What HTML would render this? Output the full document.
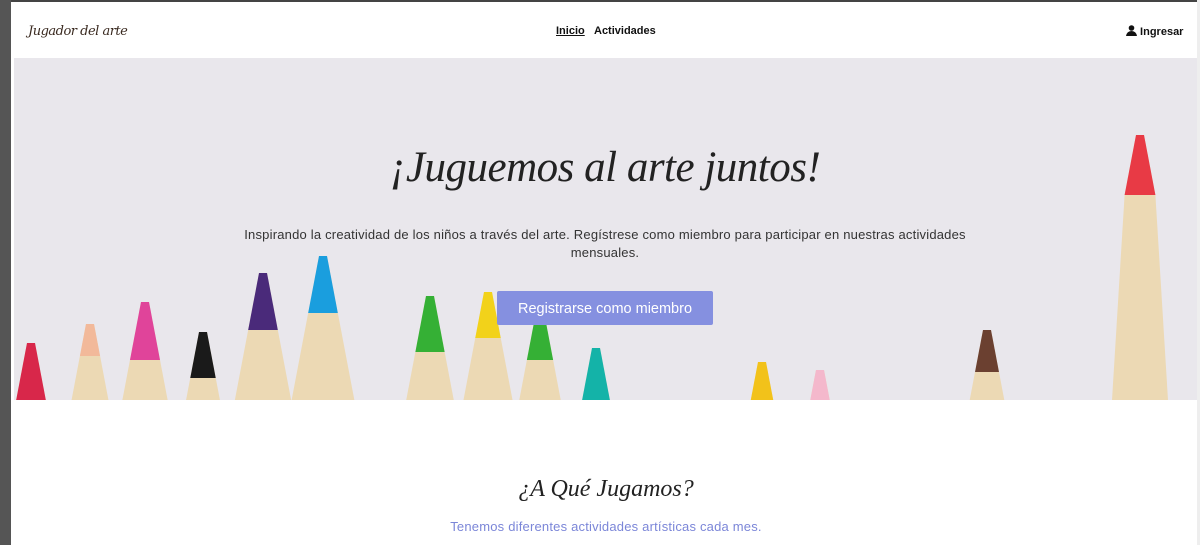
<!DOCTYPE html>
<html><head><meta charset="utf-8"><style>
*{margin:0;padding:0;box-sizing:border-box}
body{width:1200px;height:545px;overflow:hidden;background:#fff;font-family:"Liberation Sans",sans-serif;position:relative}
.lstrip{position:absolute;left:0;top:0;width:11px;height:545px;background:#555}
.tbar{position:absolute;left:0;top:0;width:1200px;height:2px;background:#444}
.rstrip{position:absolute;right:0;top:0;width:3px;height:545px;background:#eee}
.logo{position:absolute;left:28px;top:24px;font-family:"DejaVu Serif",serif;font-style:italic;font-size:13px;color:#3a2a20;letter-spacing:-0.5px}
.nav{position:absolute;top:25px;font-size:11px;font-weight:bold;color:#111}
.hero{position:absolute;left:14px;top:58px;width:1183px;height:342px;background:#e9e7ec;overflow:hidden}
h1{position:absolute;left:0;width:1210px;top:143px;text-align:center;font-family:"Liberation Serif",serif;font-style:italic;font-weight:normal;font-size:43px;color:#222;letter-spacing:-0.5px}
.p{position:absolute;left:235px;width:740px;top:226px;text-align:center;font-size:13px;line-height:18px;color:#333;letter-spacing:0.2px}
.btn{position:absolute;left:497px;top:291px;width:216px;height:34px;background:#8590e0;color:#fff;font-size:14.5px;line-height:36px;text-align:center;border-radius:2px}
h2{position:absolute;left:0;width:1212px;top:476px;text-align:center;font-family:"Liberation Serif",serif;font-style:italic;font-weight:normal;font-size:24px;color:#222}
.sub{position:absolute;left:0;width:1212px;top:519px;text-align:center;font-size:13px;color:#7b86d8;letter-spacing:0.2px}
</style></head><body>
<div class="tbar"></div><div class="lstrip"></div><div class="rstrip"></div>
<div class="logo">Jugador del arte</div>
<div class="nav" style="left:556px;text-decoration:underline">Inicio</div>
<div class="nav" style="left:594px">Actividades</div>
<div class="nav" style="left:1126px;top:25px"><svg width="11" height="11" viewBox="0 0 11 11" style="vertical-align:-1px"><circle cx="5.5" cy="3" r="2.8" fill="#111"/><path d="M0 11 Q1 6 5.5 6 Q10 6 11 11Z" fill="#111"/></svg> Ingresar</div>
<div class="hero">
<svg width="1183" height="342" viewBox="14 58 1183 342" style="position:absolute;left:0;top:0">
<g id="p"></g>
</svg>
</div>
<h1>¡Juguemos al arte juntos!</h1>
<div class="p">Inspirando la creatividad de los niños a través del arte. Regístrese como miembro para participar en nuestras actividades mensuales.</div>
<div class="btn">Registrarse como miembro</div>
<h2>¿A Qué Jugamos?</h2>
<div class="sub">Tenemos diferentes actividades artísticas cada mes.</div>
<script>
var P=[[31,343,'#d8274a',400],[90,324,'#f2b99a',356],[145,302,'#e0449a',360],[203,332,'#1a1a1a',378],[263,273,'#4a2a7a',330],[323,256,'#1a9ede',313],[430,296,'#35b035',352],[488,292,'#f2d21a',338],[540,312,'#35b035',360],[596,348,'#14b3a8',400],[762,362,'#f2c21a',400],[820,370,'#f4b8cc',400],[987,330,'#6b4030',372],[1140,135,'#e83a45',195]];
var s='';
P.forEach(function(a){var cx=a[0],t=a[1],c=a[2],lb=a[3];
function hw(y){return Math.min(4+0.19*(y-t),a[0]==1140?28:32)}
var wb=hw(400);
s+='<path d="M'+(cx-4)+' '+t+' L'+(cx-hw(lb)*1)+' '+lb+' L'+(cx-wb)+' 400 L'+(cx+wb)+' 400 L'+(cx+hw(lb))+' '+lb+' L'+(cx+4)+' '+t+'Z" fill="#ecd9b4"/>';
s+='<path d="M'+(cx-4)+' '+t+' L'+(cx-hw(lb))+' '+lb+' L'+(cx+hw(lb))+' '+lb+' L'+(cx+4)+' '+t+'Z" fill="'+c+'"/>';
});
document.getElementById('p').innerHTML=s;
</script>
</body></html>
